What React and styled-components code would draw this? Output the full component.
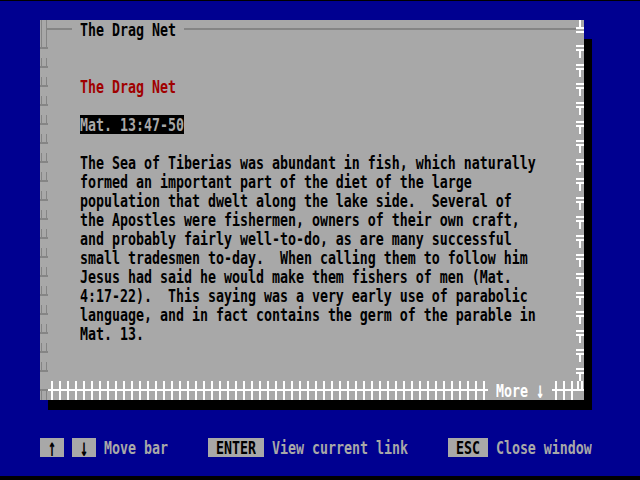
import React from 'react';
import styled, { createGlobalStyle } from 'styled-components';

const BLUE = '#000090';
const GRAY = '#a8a8a8';
const DIM = '#858585';
const WHITE = '#ffffff';

const GlobalStyle = createGlobalStyle`
  html, body {
    margin: 0;
    padding: 0;
    background: #000;
  }

  body {
    font-family: "DejaVu Sans Mono", "Liberation Mono", monospace;
    font-size: 13.29px;
    font-weight: bold;
  }
`;

const Screen = styled.div`
  width: 640px;
  height: 480px;
  box-sizing: border-box;
  border-top: 1px solid #000;
  border-bottom: 4px solid #000;
  padding: 19px 0 0 40px;
  background: ${BLUE};
  overflow: hidden;
`;

const Window = styled.div`
  position: relative;
  display: grid;
  grid-template-columns: 8px 1fr 8px;
  grid-template-rows: 19px 1fr 19px;
  width: 544px;
  height: 380px;
  background: ${GRAY};

  &::before {
    content: '';
    position: absolute;
    top: 19px;
    right: -8px;
    bottom: -10px;
    width: 8px;
    background: #000;
  }

  &::after {
    content: '';
    position: absolute;
    left: 8px;
    right: -8px;
    bottom: -10px;
    height: 10px;
    background: #000;
  }
`;

const Glyphs = styled.span`
  display: inline-block;
  white-space: pre;
  transform: scaleY(${(p) => p.$scale || 1.35});
`;

const TitleBar = styled.div`
  display: flex;
  height: 19px;
  line-height: 19px;
`;

const TitleRule = styled.div`
  flex: ${(p) => (p.$grow ? '1' : '0 0 24px')};
  height: 2px;
  margin-top: 8px;
  background: ${DIM};
`;

const TitleText = styled.div`
  padding: 0 8px;
  color: #000;
`;

const Content = styled.div`
  padding: 38px 0 0 32px;
`;

const Line = styled.div`
  height: 19px;
  line-height: 19px;
  white-space: pre;
  color: ${(p) => p.$color || '#000'};
  margin-bottom: ${(p) => (p.$gap ? '19px' : '0')};
`;

const Mark = styled.span`
  display: inline-block;
  height: 19px;
  background: #000;
  color: ${GRAY};
`;

const Fence = styled.div`
  display: flex;
  height: 19px;
  line-height: 19px;
`;

const FenceRun = styled.div`
  flex: ${(p) => (p.$grow ? '1' : '0 0 24px')};
  background:
    linear-gradient(${WHITE}, ${WHITE}) 0 8px / 100% 2px no-repeat,
    repeating-linear-gradient(90deg, transparent 0 3px, ${WHITE} 3px 5px, transparent 5px 8px);
`;

const More = styled.div`
  padding: 0 8px;
  color: ${WHITE};
`;

const StatusBar = styled.div`
  display: flex;
  gap: 40px;
  height: 19px;
  margin-top: 38px;
  line-height: 19px;
`;

const Group = styled.div`
  display: flex;
  gap: 8px;
`;

const Key = styled.div`
  width: ${(p) => (p.$arrow ? '8px' : 'auto')};
  padding: 0 8px;
  background: ${GRAY};
  color: #000;
  text-align: center;
`;

const Label = styled.div`
  color: ${GRAY};
`;

const Piece = styled.svg`
  display: block;
`;

function Corner({ color, rects }) {
  return (
    <Piece width="8" height="19">
      {rects.map(([x, y, w, h]) => (
        <rect key={`${x}-${y}-${w}`} x={x} y={y} width={w} height={h} fill={color} />
      ))}
    </Piece>
  );
}

function Strip({ id, color, rects }) {
  return (
    <Piece width="8" height="342">
      <defs>
        <pattern id={id} width="8" height="19" patternUnits="userSpaceOnUse">
          {rects.map(([x, y, w, h]) => (
            <rect key={`${x}-${y}-${w}`} x={x} y={y} width={w} height={h} fill={color} />
          ))}
        </pattern>
      </defs>
      <rect width="8" height="342" fill={`url(#${id})`} />
    </Piece>
  );
}

const paragraph = [
  'The Sea of Tiberias was abundant in fish, which naturally',
  'formed an important part of the diet of the large',
  'population that dwelt along the lake side.  Several of',
  'the Apostles were fishermen, owners of their own craft,',
  'and probably fairly well-to-do, as are many successful',
  'small tradesmen to-day.  When calling them to follow him',
  'Jesus had said he would make them fishers of men (Mat.',
  '4:17-22).  This saying was a very early use of parabolic',
  'language, and in fact contains the germ of the parable in',
  'Mat. 13.',
];

const leftMark = [[1, 0, 1, 9], [6, 0, 1, 9], [0, 8, 8, 2]];
const rightMark = [[0, 6, 8, 2], [0, 10, 8, 2], [3, 12, 2, 7]];

function App() {
  return (
    <>
      <GlobalStyle />
      <Screen>
        <Window>
          <Corner color={DIM} rects={[[1, 0, 1, 19], [6, 0, 1, 19], [6, 8, 2, 2]]} />
          <TitleBar>
            <TitleRule />
            <TitleText><Glyphs>The Drag Net</Glyphs></TitleText>
            <TitleRule $grow />
          </TitleBar>
          <Corner color={WHITE} rects={[[3, 0, 2, 7], [0, 7, 8, 2], [0, 11, 8, 2]]} />

          <Strip id="left-mark" color={DIM} rects={leftMark} />
          <Content>
            <Line $color="#a00000" $gap><Glyphs>The Drag Net</Glyphs></Line>
            <Line $gap><Mark><Glyphs>Mat. 13:47-50</Glyphs></Mark></Line>
            {paragraph.map((text) => (
              <Line key={text}><Glyphs>{text}</Glyphs></Line>
            ))}
          </Content>
          <Strip id="right-mark" color={WHITE} rects={rightMark} />

          <Corner color={DIM} rects={[[0, 8, 8, 2], [1, 10, 1, 9], [6, 10, 1, 9]]} />
          <Fence>
            <FenceRun $grow />
            <More><Glyphs>More <Glyphs $scale={1.3}>↓</Glyphs></Glyphs></More>
            <FenceRun />
          </Fence>
          <Corner color={WHITE} rects={[[1, 0, 2, 10], [5, 0, 2, 10], [0, 8, 8, 2]]} />
        </Window>

        <StatusBar>
          <Group>
            <Key $arrow><Glyphs $scale={1.9}>↑</Glyphs></Key>
            <Key $arrow><Glyphs $scale={1.9}>↓</Glyphs></Key>
            <Label><Glyphs>Move bar</Glyphs></Label>
          </Group>
          <Group>
            <Key><Glyphs>ENTER</Glyphs></Key>
            <Label><Glyphs>View current link</Glyphs></Label>
          </Group>
          <Group>
            <Key><Glyphs>ESC</Glyphs></Key>
            <Label><Glyphs>Close window</Glyphs></Label>
          </Group>
        </StatusBar>
      </Screen>
    </>
  );
}

export default App;
